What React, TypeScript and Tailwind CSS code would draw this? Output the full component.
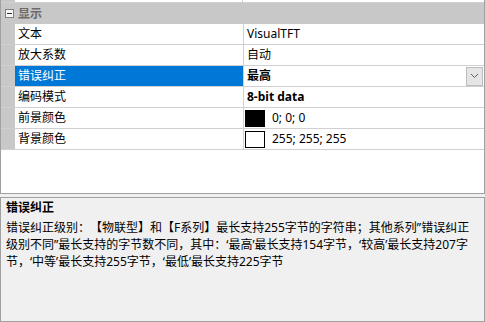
const font = "font-['Noto_Sans','Noto_Sans_CJK_SC',sans-serif]";

type Row = {
  name: string;
  value: React.ReactNode;
  selected?: boolean;
};

function Swatch({ color }: { color: string }) {
  return (
    <span
      className={`inline-block w-[20px] h-[17px] border border-black ${color}`}
    />
  );
}

export default function App() {
  const rows: Row[] = [
    { name: "文本", value: <span>VisualTFT</span> },
    { name: "放大系数", value: <span>自动</span> },
    {
      name: "错误纠正",
      selected: true,
      value: (
        <div className="flex items-center justify-between w-full h-full">
          <span className="font-bold">最高</span>
          <div className="w-[17px] h-[19px] mr-[1px] bg-[#e5e5e5] border border-[#bcbcbc] flex items-center justify-center">
            <svg width="9" height="6" viewBox="0 0 9 6">
              <path d="M1 1 L4.5 4.5 L8 1" stroke="#606060" strokeWidth="1" fill="none" />
            </svg>
          </div>
        </div>
      ),
    },
    { name: "编码模式", value: <span className="font-bold">8-bit data</span> },
    {
      name: "前景颜色",
      value: (
        <div className="flex items-center gap-[7px] -ml-[2px]">
          <Swatch color="bg-black" />
          <span>0; 0; 0</span>
        </div>
      ),
    },
    {
      name: "背景颜色",
      value: (
        <div className="flex items-center gap-[7px] -ml-[2px]">
          <Swatch color="bg-white" />
          <span>255; 255; 255</span>
        </div>
      ),
    },
  ];

  return (
    <div className={`w-[485px] h-[322px] bg-[#f0f0f0] overflow-hidden text-[12px] text-black [text-spacing-trim:space-all] ${font}`}>
      {/* property grid */}
      <div className="h-[194px] bg-white border-l border-r border-b border-[#a0a0a0] flex flex-col">
        {/* stub of the row above */}
        <div className="flex h-[3px] border-b border-[#d0d0d0]">
          <div className="w-[14px] bg-[#c8c8c8]" />
          <div className="w-[228px] border-r border-[#d0d0d0]" />
          <div className="flex-1" />
        </div>

        {/* category */}
        <div className="flex items-center h-[21px] bg-[#c8c8c8]">
          <div className="w-[14px] h-full flex items-center justify-center">
            <div className="w-[9px] h-[9px] border border-[#808080] bg-[#f7f7f7] flex items-center justify-center ml-[2px]">
              <div className="w-[5px] h-[1px] bg-[#303030]" />
            </div>
          </div>
          <span className="pl-[3px] font-bold text-[#6a6a6a]">显示</span>
        </div>

        {rows.map((r) => (
          <div key={r.name} className="flex h-[21px] border-b border-[#d0d0d0]">
            <div className="w-[14px] bg-[#c8c8c8]" />
            <div
              className={`w-[229px] pl-[3px] flex items-center border-r border-[#d0d0d0] ${
                r.selected ? "bg-[#0078d7] text-white" : ""
              }`}
            >
              {r.name}
            </div>
            <div className="flex-1 pl-[3px] flex items-center">{r.value}</div>
          </div>
        ))}
      </div>

      {/* description panel */}
      <div className="mt-[3px] h-[125px] border border-[#a0a0a0] bg-[#f0f0f0] pl-[5px] pr-[4px]">
        <div className="font-bold leading-[20px]">错误纠正</div>
        <div className="mt-[1px] leading-[17px] whitespace-nowrap">
          <div>错误纠正级别：【物联型】和【F系列】最长支持255字节的字符串；其他系列”错误纠正</div>
          <div>级别不同”最长支持的字节数不同，其中：‘最高’最长支持154字节，‘较高’最长支持207字</div>
          <div>节，‘中等’最长支持255字节，‘最低’最长支持225字节</div>
        </div>
      </div>
    </div>
  );
}
